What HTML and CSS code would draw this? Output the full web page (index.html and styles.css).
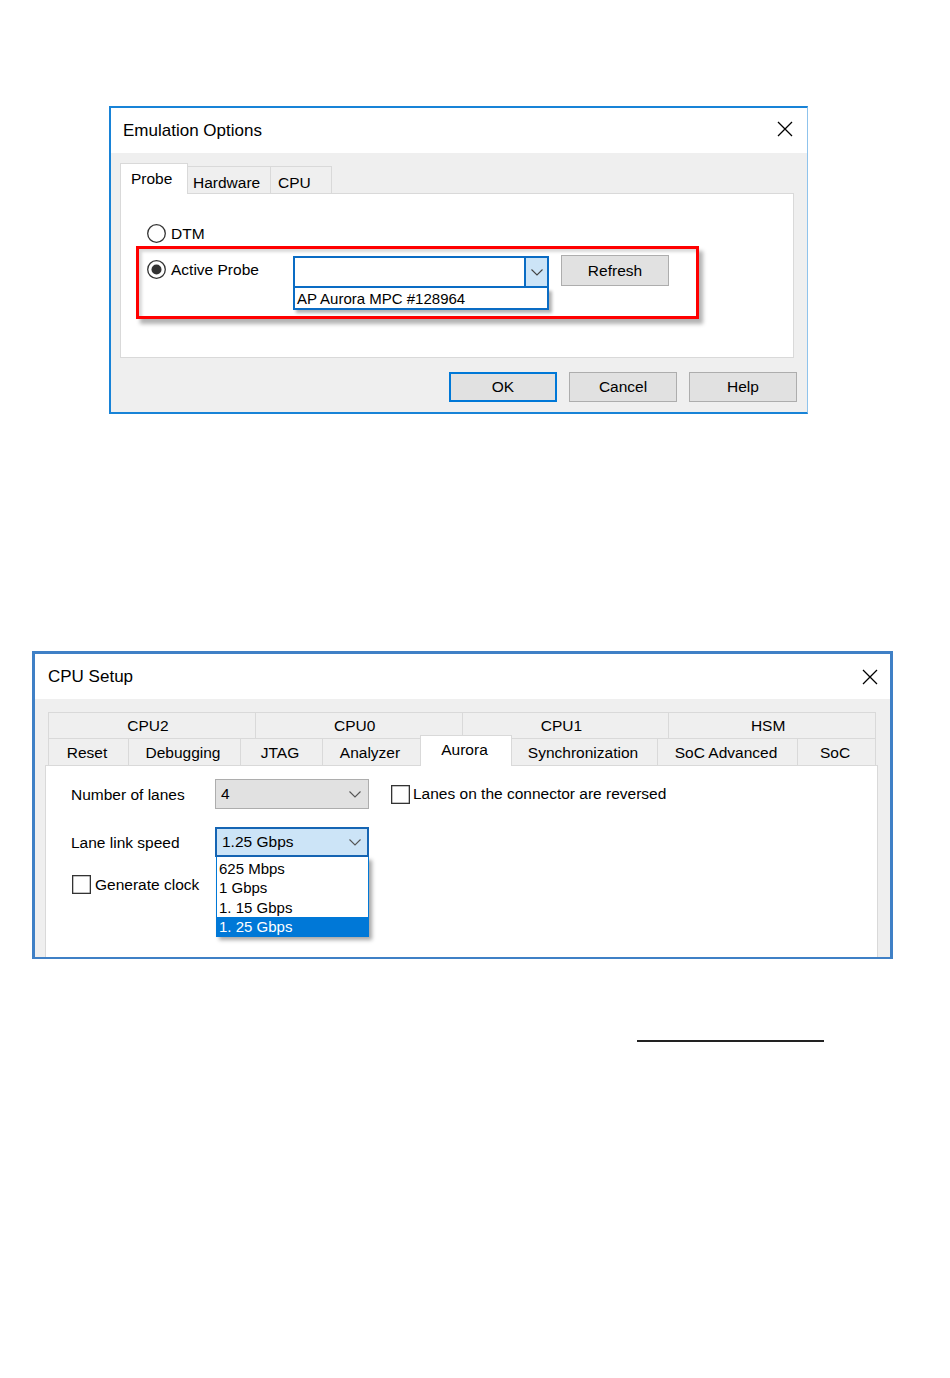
FILE: index.html
```html
<html>
    <head>
        <link rel="stylesheet" href="styles.css">
    </head>
    <body>
        <div class="dialog emu">
            <div class="titlebar">
                <span class="title">Emulation Options</span>
                <svg class="close" width="16" height="16" viewBox="0 0 16 16"><path d="M1 1L15 15M15 1L1 15" stroke="#000" stroke-width="1.3" fill="none"/></svg>
            </div>
            <div class="dlg-body">
                <div class="tabs">
                    <div class="tab sel t-probe">Probe</div>
                    <div class="tab t-hw">Hardware</div>
                    <div class="tab t-cpu">CPU</div>
                </div>
                <div class="panel">
                    <div class="radio-row">
                        <svg class="radio" width="19" height="19" viewBox="0 0 19 19"><circle cx="9.5" cy="9.5" r="8.8" fill="#fff" stroke="#333" stroke-width="1.3"/></svg>
                        <span>DTM</span>
                    </div>
                    <div class="redbox">
                        <div class="radio-row probe-opt">
                            <svg class="radio" width="19" height="19" viewBox="0 0 19 19"><circle cx="9.5" cy="9.5" r="8.8" fill="#fff" stroke="#333" stroke-width="1.3"/><circle cx="9.5" cy="9.5" r="5" fill="#333"/></svg>
                            <span>Active Probe</span>
                        </div>
                        <div class="combo-wrap">
                            <div class="combo">
                                <span class="combo-btn">
                                    <svg width="12" height="7" viewBox="0 0 12 7"><path d="M0.5 0.5L6 6L11.5 0.5" stroke="#444" stroke-width="1.1" fill="none"/></svg>
                                </span>
                            </div>
                            <div class="droplist">AP Aurora MPC #128964</div>
                        </div>
                        <button class="btn refresh">Refresh</button>
                    </div>
                </div>
                <div class="buttons">
                    <button class="btn default">OK</button>
                    <button class="btn">Cancel</button>
                    <button class="btn">Help</button>
                </div>
            </div>
        </div>

        <div class="dialog cpu">
            <div class="titlebar">
                <span class="title">CPU Setup</span>
                <svg class="close" width="16" height="16" viewBox="0 0 16 16"><path d="M1 1L15 15M15 1L1 15" stroke="#000" stroke-width="1.3" fill="none"/></svg>
            </div>
            <div class="dlg-body">
                <div class="tabrows">
                    <div class="tabrow top-row">
                        <div class="ctab">CPU2</div>
                        <div class="ctab">CPU0</div>
                        <div class="ctab">CPU1</div>
                        <div class="ctab">HSM</div>
                    </div>
                    <div class="tabrow bot-row">
                        <div class="ctab w-reset">Reset</div>
                        <div class="ctab w-debug">Debugging</div>
                        <div class="ctab w-jtag">JTAG</div>
                        <div class="ctab w-analyzer">Analyzer</div>
                        <div class="ctab sel w-aurora">Aurora</div>
                        <div class="ctab w-sync">Synchronization</div>
                        <div class="ctab w-socadv">SoC Advanced</div>
                        <div class="ctab w-soc">SoC</div>
                    </div>
                </div>
                <div class="panel">
                    <div class="frow">
                        <span class="lbl">Number of lanes</span>
                        <div class="select">
                            <span>4</span>
                            <svg width="12" height="7" viewBox="0 0 12 7"><path d="M0.5 0.5L6 6L11.5 0.5" stroke="#555" stroke-width="1.1" fill="none"/></svg>
                        </div>
                        <div class="check">
                            <svg width="19" height="19" viewBox="0 0 19 19"><rect x="0.65" y="0.65" width="17.7" height="17.7" fill="#fff" stroke="#333" stroke-width="1.3"/></svg>
                            <span>Lanes on the connector are reversed</span>
                        </div>
                    </div>
                    <div class="frow">
                        <span class="lbl">Lane link speed</span>
                        <div class="select open">
                            <span>1.25 Gbps</span>
                            <svg width="12" height="7" viewBox="0 0 12 7"><path d="M0.5 0.5L6 6L11.5 0.5" stroke="#555" stroke-width="1.1" fill="none"/></svg>
                            <div class="popup">
                                <div class="opt">625 Mbps</div>
                                <div class="opt">1 Gbps</div>
                                <div class="opt">1. 15 Gbps</div>
                                <div class="opt hl">1. 25 Gbps</div>
                            </div>
                        </div>
                    </div>
                    <div class="check gen">
                        <svg width="19" height="19" viewBox="0 0 19 19"><rect x="0.65" y="0.65" width="17.7" height="17.7" fill="#fff" stroke="#333" stroke-width="1.3"/></svg>
                        <span>Generate clock</span>
                    </div>
                </div>
            </div>
        </div>

        <div class="rule"></div>
    </body>
</html>
```

FILE: styles.css
```css
* {
    box-sizing: border-box;
}

body {
    margin: 0;
    background: #fff;
    color: #000;
    font-family: "Segoe UI", "Liberation Sans", Arial, sans-serif;
    font-size: 15.5px;
}

.dialog {
    background: #efefef;
    overflow: hidden;
}

.emu {
    margin: 106px 0 0 109px;
    width: 699px;
    height: 308px;
    border: 2px solid #1883d7;
    border-right: 1px solid #8fc3ec;
}

.cpu {
    margin: 237px 0 0 32px;
    width: 861px;
    height: 308px;
    border: 3px solid #3f80c6;
    border-bottom-width: 2px;
}

.titlebar {
    height: 45px;
    background: #fff;
    display: flex;
    align-items: center;
    justify-content: space-between;
}

.emu .titlebar {
    padding: 0 14px 0 12px;
}

.cpu .titlebar {
    padding: 0 12px 0 13px;
}

.title {
    font-size: 17px;
}

.emu .close {
    margin-bottom: 4px;
}

/* emulation options */

.emu .dlg-body {
    padding: 10px 0 0 9px;
}

.tabs {
    display: flex;
    align-items: flex-end;
    height: 30px;
}

.tab {
    height: 27px;
    border-top: 1px solid #d9d9d9;
    border-right: 1px solid #d9d9d9;
    padding-top: 4px;
    line-height: 23px;
    background: #efefef;
}

.tab.sel {
    height: 31px;
    margin-bottom: -1px;
    padding-top: 3px;
    border-left: 1px solid #d9d9d9;
    background: #fff;
    position: relative;
    z-index: 1;
}

.t-probe {
    width: 68px;
    padding-left: 10px;
}

.t-hw {
    width: 83px;
    padding-left: 5px;
}

.t-cpu {
    width: 61px;
    padding-left: 7px;
}

.panel {
    background: #fff;
    border: 1px solid #d9d9d9;
}

.emu .panel {
    width: 674px;
    height: 165px;
    padding: 30px 0 0 26px;
}

.radio-row {
    display: flex;
    align-items: center;
    gap: 5px;
    height: 19px;
}

.radio {
    flex: none;
}

.redbox {
    display: flex;
    align-items: flex-start;
    margin: 3px 0 0 -11px;
    width: 563px;
    height: 73px;
    padding-left: 8px;
    border: 3px solid #ff0000;
    box-shadow: 4px 5px 4px rgba(0, 0, 0, 0.3), inset 3px 3px 3px rgba(0, 0, 0, 0.15);
}

.probe-opt {
    width: 146px;
    margin-top: 11px;
}

.combo-wrap {
    width: 256px;
    margin-top: 7px;
}

.combo {
    height: 32px;
    border: 2px solid #0a6cc4;
    background: #fff;
    display: flex;
    justify-content: flex-end;
}

.combo-btn {
    width: 23px;
    border-left: 2px solid #0a6cc4;
    background: #cce4f7;
    display: flex;
    align-items: center;
    justify-content: center;
}

.droplist {
    height: 22px;
    border: 2px solid #0a6cc4;
    border-top: none;
    background: #fff;
    padding-left: 2px;
    line-height: 21px;
    font-size: 15px;
    box-shadow: 3px 3px 3px rgba(0, 0, 0, 0.3);
}

.btn {
    width: 108px;
    height: 30px;
    padding: 0;
    background: #e1e1e1;
    border: 1px solid #adadad;
    color: #000;
    font: inherit;
}

.btn.default {
    border: 2px solid #0078d7;
}

.btn.refresh {
    height: 31px;
    margin: 6px 0 0 12px;
}

.buttons {
    display: flex;
    justify-content: flex-end;
    gap: 12px;
    margin-top: 14px;
    padding-right: 10px;
}

/* cpu setup */

.cpu .dlg-body {
    padding: 13px 0 0 10px;
}

.tabrows {
    margin-left: 3px;
    width: 828px;
}

.tabrow {
    display: flex;
}

.ctab {
    border-top: 1px solid #d9d9d9;
    border-left: 1px solid #d9d9d9;
    background: #efefef;
    text-align: center;
}

.ctab:last-child {
    border-right: 1px solid #d9d9d9;
}

.top-row {
    height: 26px;
}

.top-row .ctab {
    flex: 1;
    height: 26px;
    line-height: 26px;
    padding-right: 8px;
}

.bot-row {
    height: 27px;
    align-items: flex-end;
}

.bot-row .ctab {
    height: 27px;
    line-height: 27px;
    padding-right: 3px;
}

.bot-row .ctab.sel {
    height: 31px;
    margin: 0 -1px -1px 0;
    border-right: 1px solid #d9d9d9;
    background: #fff;
    line-height: 28px;
    position: relative;
    z-index: 1;
}

.w-reset { width: 80px; }
.w-debug { width: 112px; }
.w-jtag { width: 82px; }
.w-analyzer { width: 98px; }
.w-aurora { width: 92px; }
.w-sync { width: 146px; }
.w-socadv { width: 140px; }
.w-soc { width: 79px; }

.cpu .panel {
    width: 833px;
    height: 260px;
    padding: 13px 0 0 25px;
}

.frow {
    display: flex;
    align-items: center;
    height: 30px;
}

.frow + .frow {
    margin-top: 18px;
}

.lbl {
    width: 144px;
    padding-top: 2px;
}

.select {
    position: relative;
    width: 154px;
    height: 30px;
    border: 1px solid #adadad;
    background: #e1e1e1;
    display: flex;
    align-items: center;
    justify-content: space-between;
    padding: 0 7px 0 5px;
}

.select.open {
    border: 2px solid #1565b4;
    background: #cce4f7;
    padding: 0 6px 0 5px;
}

.popup {
    position: absolute;
    top: calc(100% + 2px);
    left: -1px;
    width: 153px;
    padding-top: 2px;
    border: 1px solid #0078d7;
    border-top: none;
    background: #fff;
    box-shadow: 3px 3px 4px rgba(0, 0, 0, 0.35);
    font-size: 15px;
    z-index: 2;
}

.popup .opt {
    height: 19.25px;
    line-height: 19.25px;
    padding-left: 2px;
    color: #000;
}

.popup .opt.hl {
    background: #0078d7;
    color: #fff;
}

.check {
    display: flex;
    align-items: center;
    gap: 3px;
}

.frow .check {
    margin-left: 22px;
}

.check.gen {
    margin: 18px 0 0 1px;
    gap: 4px;
}

.rule {
    margin: 81px 0 0 637px;
    width: 187px;
    height: 2px;
    background: #222;
}
```
